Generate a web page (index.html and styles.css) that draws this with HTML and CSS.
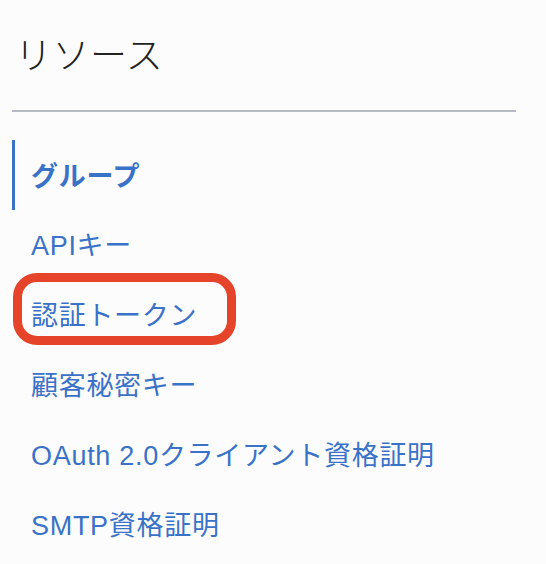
FILE: index.html
```html
<!DOCTYPE html>
<html lang="ja">
<head>
<meta charset="utf-8">
<link rel="stylesheet" href="styles.css">
</head>
<body>
<nav class="side">
  <h1 class="title">リソース</h1>
  <hr class="divider">
  <ul class="menu">
    <li class="item active">グループ</li>
    <li class="item">APIキー</li>
    <li class="item highlighted"><span class="label">認証トークン</span><span class="mark"></span></li>
    <li class="item">顧客秘密キー</li>
    <li class="item">OAuth 2.0クライアント資格証明</li>
    <li class="item">SMTP資格証明</li>
  </ul>
</nav>
</body>
</html>
```
FILE: styles.css
```css
html, body {
  margin: 0;
  padding: 0;
  background: #fcfcfd;
}
body {
  font-family: "Liberation Sans", "Noto Sans CJK JP", sans-serif;
}
.side {
  width: 504px;
  padding: 0 0 0 12px;
}
.title {
  margin: 0;
  height: 108px;
  box-sizing: border-box;
  padding: 29px 0 0 3px;
  font-family: "Noto Sans CJK JP", sans-serif;
  font-weight: 300;
  font-size: 37px;
  line-height: 48px;
  letter-spacing: 0.5px;
  color: #222;
}
.divider {
  margin: 2px 0 0 0;
  border: 0;
  height: 2px;
  background: #b6bac4;
}
.menu {
  list-style: none;
  margin: 28px 0 0 0;
  padding: 0;
}
.item {
  position: relative;
  height: 70px;
  box-sizing: border-box;
  display: flex;
  align-items: center;
  padding-left: 16px;
  padding-bottom: 4px;
  border-left: 3px solid transparent;
  font-size: 27px;
  letter-spacing: 0.7px;
  color: #3a72c8;
}
.item.active {
  border-left-color: #3a72c8;
  font-weight: 700;
  padding-bottom: 2px;
}
.highlighted .mark {
  position: absolute;
  left: -2px;
  top: -7px;
  width: 205px;
  height: 54px;
  border: 9px solid #e5432a;
  border-radius: 24px;
}
```
